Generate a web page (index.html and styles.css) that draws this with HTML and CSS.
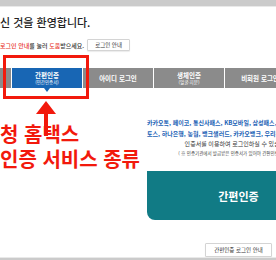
FILE: index.html
```html
<!DOCTYPE html>
<html lang="ko">
<head>
  <meta charset="UTF-8" />
  <meta name="viewport" content="width=device-width, initial-scale=1.0" />
  <title>홈택스 로그인</title>
  <link rel="stylesheet" href="styles.css">
</head>
<body>
  <div class="page">
    <div class="topbar"></div>
    <h2 class="welcome">신 것을 환영합니다.</h2>
    <div class="help">
      <p><span class="red">로그인 안내</span>를 눌러 <span class="red">도움</span>받으세요.</p>
      <button class="btn">로그인 안내</button>
    </div>
    <nav class="tabs">
      <a class="tab active"><b>간편인증</b><small>(민간인증서)</small></a>
      <a class="tab"><b>아이디 로그인</b></a>
      <a class="tab"><b>생체인증</b><small>(얼굴·지문)</small></a>
      <a class="tab"><b>비회원 로그인</b></a>
    </nav>
    <section class="content">
      <div class="note">
        <svg class="arrow" width="20" height="35" viewBox="0 0 20 35">
          <polygon points="10,0 0,13 20,13" fill="#f2190c" />
          <rect x="8" y="12" width="4" height="23" fill="#f2190c" />
        </svg>
        <p class="note-text">청 홈택스<br>인증 서비스 종류</p>
      </div>
      <div class="panel">
        <p class="providers">카카오톡, 페이코, 통신사패스, KB모바일, 삼성패스, 신한인증서,<br>토스, 하나은행, 농협, 뱅크샐러드, 카카오뱅크, 우리은행 등</p>
        <p class="desc">인증서를 이용하여 로그인하실 수 있습니다.</p>
        <p class="hint">( ※ 인증기관에서 발급받은 인증서가 있어야 간편인증 로그인 가능 )</p>
        <button class="big-btn">간편인증</button>
        <div class="guide"><button class="btn">간편인증 로그인 안내</button></div>
      </div>
    </section>
    <div class="bottombar"></div>
    <div class="redbox"></div>
  </div>
</body>
</html>
```

FILE: styles.css
```css
* { box-sizing: border-box; }
body, html {
  margin: 0;
  padding: 0;
  font-family: "Noto Sans CJK KR", "Noto Sans", sans-serif;
  background: #fff;
  overflow: hidden;
}
.page {
  position: relative;
  width: 276px;
  height: 260px;
  display: flex;
  flex-direction: column;
  overflow: hidden;
}
.topbar {
  flex: none;
  height: 7px;
  background: #cbcbcb;
  border-bottom: 1px solid #e9e9e9;
}
.welcome {
  margin: 9px 0 0;
  font-size: 11px;
  line-height: 12px;
  font-weight: 500;
  color: #222;
  white-space: nowrap;
}
.help {
  display: flex;
  align-items: center;
  gap: 3px;
  margin-top: 11px;
  height: 12px;
}
.help p {
  margin: 0;
  font-size: 6px;
  font-weight: 500;
  color: #333;
  white-space: nowrap;
}
.red { color: #e8332a; }
.btn {
  font-family: inherit;
  font-size: 5.5px;
  color: #333;
  height: 12px;
  padding: 0 7px;
  background: #fff;
  border: 1px solid #d4d4d4;
  border-radius: 1px;
  box-shadow: 0 1px 1px rgba(0, 0, 0, 0.08);
}
.tabs {
  flex: none;
  display: flex;
  height: 20px;
  margin-top: 17px;
  padding-left: 11px;
  background: #8b8b8b;
}
.tab {
  position: relative;
  flex: none;
  width: 71px;
  border-left: 1px solid #fff;
  display: flex;
  flex-direction: column;
  justify-content: center;
  align-items: center;
  color: #fff;
  line-height: 1;
}
.tab b {
  font-size: 6.5px;
  font-weight: bold;
}
.tab small {
  font-size: 4.5px;
  margin-top: 2px;
}
.tab.active { background: #1866b4; }
.tab.active::after {
  content: "";
  position: absolute;
  left: 50%;
  bottom: -4px;
  margin-left: -3px;
  border-left: 3px solid transparent;
  border-right: 3px solid transparent;
  border-top: 4px solid #1866b4;
}
.content {
  display: flex;
}
.note {
  position: relative;
  flex: none;
  width: 147px;
  padding-top: 33px;
}
.arrow {
  position: absolute;
  left: 36px;
  top: 13px;
}
.note-text {
  margin: 0;
  font-size: 20px;
  line-height: 25px;
  font-weight: bold;
  color: #f2190c;
  white-space: nowrap;
}
.panel {
  flex: none;
  width: 183px;
  padding-top: 29px;
  text-align: center;
}
.panel p {
  margin: 0;
  white-space: nowrap;
}
.providers {
  font-size: 6px;
  line-height: 11px;
  font-weight: bold;
  color: #1b62b5;
  text-align: left;
}
.desc {
  font-size: 6px;
  line-height: 10px;
  color: #333;
}
.hint {
  padding-left: 6px;
  font-size: 4.5px;
  line-height: 9px;
  color: #444;
}
.big-btn {
  display: block;
  width: 100%;
  height: 49px;
  margin-top: 13px;
  border: none;
  border-radius: 0 0 0 8px;
  background: #117b85;
  color: #fff;
  font-family: inherit;
  font-size: 11px;
  font-weight: bold;
}
.guide {
  margin-top: 13px;
}
.guide .btn {
  height: 14px;
  padding: 0 8px;
}
.bottombar {
  flex: none;
  margin-top: auto;
  height: 7px;
  background: #cbcbcb;
  border-top: 1px solid #e9e9e9;
}
.redbox {
  position: absolute;
  left: 3px;
  top: 55px;
  width: 86px;
  height: 44px;
  border: 3px solid #f2190c;
}
```
